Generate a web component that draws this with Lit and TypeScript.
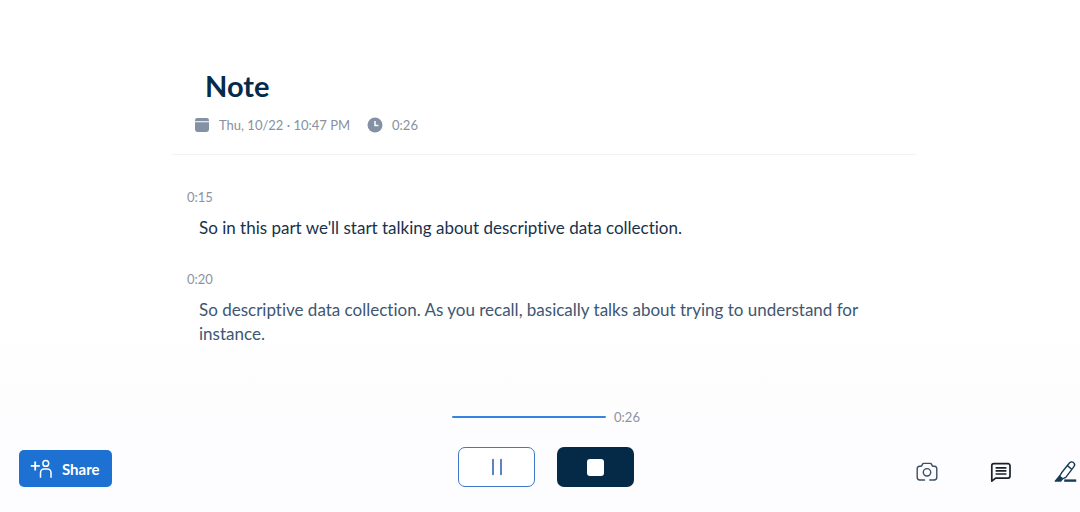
import { LitElement, html, css } from "lit";
import { customElement, state } from "lit/decorators.js";

interface Segment {
  time: string;
  text: string;
  pending?: boolean;
}

const segments: Segment[] = [
  { time: "0:15", text: "So in this part we'll start talking about descriptive data collection." },
  {
    time: "0:20",
    text: "So descriptive data collection. As you recall, basically talks about trying to understand for instance.",
    pending: true,
  },
];

@customElement("note-header")
class NoteHeader extends LitElement {
  static styles = css`
    :host { display: block; padding: 67px 20px 19px; border-bottom: 1px solid #f1f2f4; }
    .title { margin: 0 0 10px; padding-left: 13px; font-size: 29px; line-height: 38px; font-weight: 700; color: #062b4a; }
    .meta { display: flex; align-items: center; gap: 17px; padding-left: 2px; font-size: 13px; line-height: 20px; color: #8791a0; }
    .item { display: flex; align-items: center; gap: 9px; }
    .icon { display: block; width: 16px; height: 16px; fill: #8491a5; }
  `;

  render() {
    return html`
      <h1 class="title">Note</h1>
      <div class="meta">
        <span class="item">
          <svg class="icon" viewBox="0 0 16 16" aria-hidden="true">
            <path d="M3.2 1h9.6A2.2 2.2 0 0 1 15 3.2v1H1v-1A2.2 2.2 0 0 1 3.2 1Z" />
            <path d="M1 5.2h14v7.4a2.4 2.4 0 0 1-2.4 2.4H3.4A2.4 2.4 0 0 1 1 12.600Z" />
          </svg>
          Thu, 10/22 · 10:47 PM
        </span>
        <span class="item">
          <svg class="icon" viewBox="0 0 16 16" aria-hidden="true">
            <circle cx="8" cy="8" r="7.500" />
            <path d="M8 4v4.500h3.400" fill="none" stroke="#fff" stroke-width="1.500" />
          </svg>
          0:26
        </span>
      </div>
    `;
  }
}

@customElement("recorder-bar")
class RecorderBar extends LitElement {
  static styles = css`
    :host { display: grid; grid-template-columns: 1fr auto 1fr; align-items: end; padding: 0 0 25px 12px; }
    button { font: inherit; cursor: pointer; padding: 0; border: 0; background: none; display: flex; align-items: center; justify-content: center; box-sizing: border-box; }
    svg { display: block; }
    .left { padding-left: 7px; }
    .share { height: 37px; padding: 0 12px 0 11px; gap: 8px; border-radius: 5px; background: #1c71d3; color: #fff; font-size: 15px; font-weight: 700; }
    .center { display: flex; flex-direction: column; align-items: center; gap: 20px; }
    .timeline { display: flex; align-items: center; gap: 8px; font-size: 13px; line-height: 20px; color: #8c939e; }
    .track { appearance: none; display: block; width: 154px; height: 2px; border: 0; border-radius: 1px; background: #d5e3f7; overflow: hidden; }
    .track::-webkit-progress-bar { background: #d5e3f7; }
    .track::-webkit-progress-value { background: #3683e2; }
    .buttons { display: flex; gap: 22px; }
    .control { width: 77px; height: 40px; border-radius: 7px; }
    .pause { border: 1px solid #3b79c6; background: #fff; }
    .stop { background: #052a48; }
    .tools { display: flex; justify-content: flex-end; gap: 41px; padding: 0 2px 3px 0; }
    .insert { display: flex; gap: 50px; }
    .tool { width: 24px; height: 24px; }
  `;

  @state() private paused = false;

  render() {
    return html`
      <div class="left">
        <button class="share">
          <svg width="24" height="24" viewBox="0 0 24 24" fill="none" stroke="#fff" stroke-width="1.500" aria-hidden="true">
            <path d="M0.800 8.900h9M5.200 4.400v9" stroke-width="1.800" />
            <circle cx="15.800" cy="6.400" r="2.900" />
            <path d="M10.500 20.800v-5.100a3.600 3.600 0 0 1 3.600-3.600h3.300a3.600 3.600 0 0 1 3.600 3.600v5.100" />
          </svg>
          Share
        </button>
      </div>
      <div class="center">
        <div class="timeline">
          <progress class="track" value="26" max="26" aria-label="Recording position"></progress>
          <span>0:26</span>
        </div>
        <div class="buttons">
          <button class="control pause" aria-label="Pause" aria-pressed=${this.paused} @click=${() => (this.paused = !this.paused)}>
            <svg width="16" height="18" viewBox="0 0 16 18" aria-hidden="true">
              <path d="M4 1.500v15M12 1.500v15" stroke="#3465b4" stroke-width="1.600" stroke-linecap="round" />
            </svg>
          </button>
          <button class="control stop" aria-label="Stop">
            <svg width="17" height="17" viewBox="0 0 17 17" aria-hidden="true">
              <rect width="17" height="17" rx="3" fill="#fff" />
            </svg>
          </button>
        </div>
      </div>
      <div class="tools">
        <div class="insert">
          <button class="tool" aria-label="Add photo">
            <svg width="24" height="24" viewBox="0 0 24 24" fill="none" stroke="#3a5066" stroke-width="1.400" stroke-linecap="round" stroke-linejoin="round" aria-hidden="true">
              <path d="M9.500 20H4.800A2.800 2.800 0 0 1 2.200 17.200V8.800A2.600 2.600 0 0 1 4.600 6.200h1c.8 0 1.200-.4 1.500-1.100l.3-.7c.3-.7.8-1 1.500-1h6.200c.7 0 1.200.3 1.500 1l.3.7c.3.7.7 1.100 1.500 1.100h1a2.600 2.600 0 0 1 2.400 2.600v8.400a2.800 2.800 0 0 1-2.600 2.800H14.800" />
              <circle cx="12" cy="12.300" r="3.700" />
            </svg>
          </button>
          <button class="tool" aria-label="Add comment">
            <svg width="24" height="24" viewBox="0 0 24 24" fill="none" stroke="#182029" stroke-width="1.700" stroke-linejoin="round" aria-hidden="true">
              <path d="M4.800 3.700h14.200a2 2 0 0 1 2 2v10.400a2 2 0 0 1-2 2H6.600l-3.800 3V5.700a2 2 0 0 1 2-2Z" />
              <path d="M6.600 7.800h10.800M6.600 10.900h10.800M6.600 14h10.800" />
            </svg>
          </button>
        </div>
        <button class="tool" aria-label="Highlight">
          <svg width="24" height="24" viewBox="0 0 24 24" fill="none" stroke="#173c55" stroke-width="1.400" stroke-linejoin="round" aria-hidden="true">
            <path d="M7.600 12.800 15.200 3.200c1-1.400 2.900-1.700 4.200-.7s1.500 2.800.5 4.100L11.800 17.400l-3.400 1.400-3-2.500Z" />
            <path d="m13.400 5.600 4.300 3.600" />
            <path d="M5.400 16.300 1.300 21.100h5.400l1.700-2.300Z" fill="#173c55" />
            <path d="M10.200 20.600h12" stroke-width="2.400" />
          </svg>
        </button>
      </div>
    `;
  }
}

@customElement("app-root")
class AppRoot extends LitElement {
  static styles = css`
    :host { display: flex; flex-direction: column; min-height: 100vh; box-sizing: border-box; background: linear-gradient(#fff 60%, #fdfcfe 90%); font-family: Lato, "Open Sans", sans-serif; }
    .page { flex: 1; box-sizing: border-box; width: 100%; padding-left: 8px; }
    .column { max-width: 744px; margin: 0 auto; }
    .transcript { display: flex; flex-direction: column; gap: 29px; padding: 32px 56px 24px 15px; }
    .segment { display: flex; flex-direction: column; gap: 9px; }
    .time { font-size: 13px; line-height: 20px; color: #8c939e; }
    .text { margin: 0; padding-left: 12px; font-variant-ligatures: none; font-size: 17px; line-height: 24px; color: #17324d; }
    .pending { color: #405672; }
  `;

  render() {
    return html`
      <main class="page">
        <div class="column">
          <note-header></note-header>
          <section class="transcript">
            ${segments.map(
              (s) => html`
                <div class="segment">
                  <time class="time">${s.time}</time>
                  <p class="text ${s.pending ? "pending" : ""}">${s.text}</p>
                </div>
              `
            )}
          </section>
        </div>
      </main>
      <recorder-bar></recorder-bar>
    `;
  }
}
